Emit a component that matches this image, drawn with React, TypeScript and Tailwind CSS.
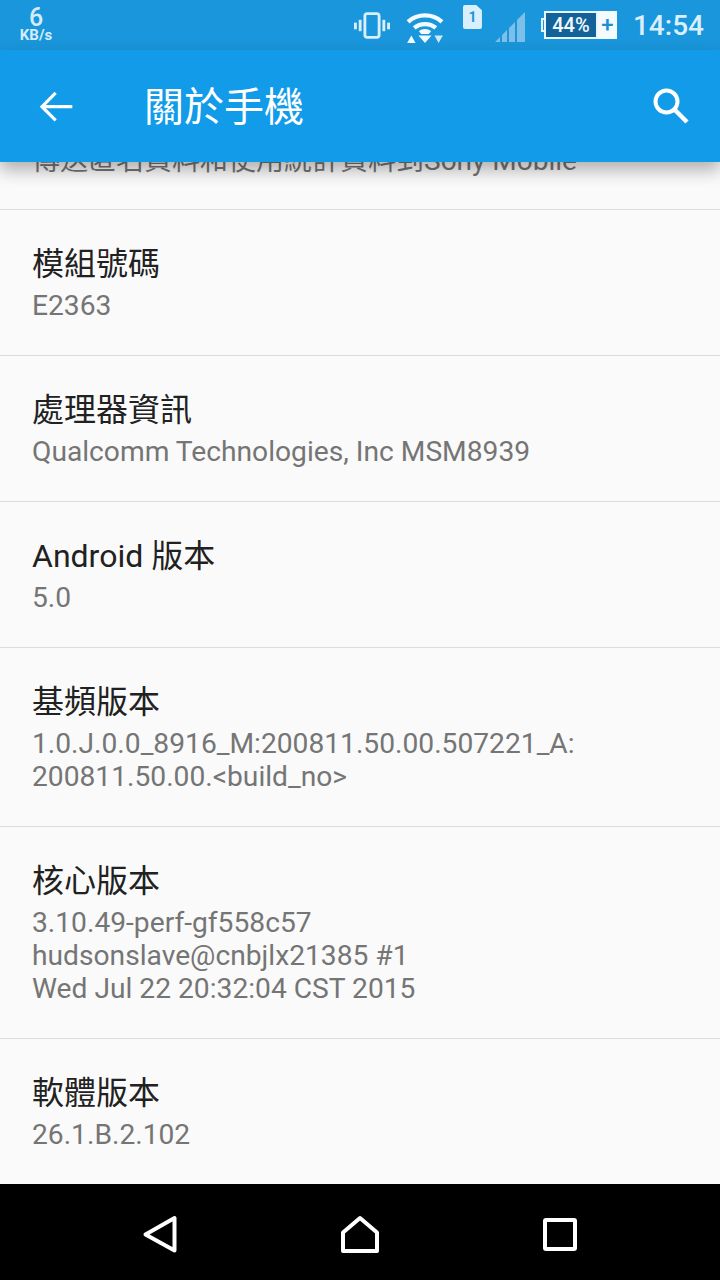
import React from 'react';

const rows = [
  { title: '模組號碼', lines: ['E2363'] },
  { title: '處理器資訊', lines: ['Qualcomm Technologies, Inc MSM8939'] },
  { title: 'Android 版本', lines: ['5.0'] },
  { title: '基頻版本', lines: ['1.0.J.0.0_8916_M:200811.50.00.507221_A:', '200811.50.00.<build_no>'] },
  { title: '核心版本', lines: ['3.10.49-perf-gf558c57', 'hudsonslave@cnbjlx21385 #1', 'Wed Jul 22 20:32:04 CST 2015'] },
  { title: '軟體版本', lines: ['26.1.B.2.102'] },
];

const StatusBar = () => (
  <div className="h-[50px] bg-[#1a96dc] flex items-center relative shrink-0">
    <div className="absolute left-[17px] top-[7px] w-[38px] flex flex-col items-center text-[#d3edfb] font-medium">
      <span className="text-[25px] leading-[22px]">6</span>
      <span className="text-[15px] leading-[13px] font-bold">KB/s</span>
    </div>
    <div className="ml-auto flex items-center h-full">
      {/* vibrate */}
      <svg width="36" height="29" viewBox="0 0 38 30" className="mr-[16px]" fill="none">
        <rect x="11.5" y="2.5" width="15" height="25" rx="2.5" stroke="#d9f0fc" strokeWidth="3" />
        <rect x="5" y="9" width="3" height="12" fill="#d9f0fc" />
        <rect x="0" y="12" width="3" height="7" fill="#d9f0fc" />
        <rect x="30" y="9" width="3" height="12" fill="#d9f0fc" />
        <rect x="35" y="12" width="3" height="7" fill="#d9f0fc" />
      </svg>
      {/* wifi */}
      <svg width="38" height="32" viewBox="0 0 40 34" className="mr-[19px] mt-[4px]" fill="none">
        <path d="M2 11.5C12 2.5 28 2.5 38 11.5" stroke="#f2fafe" strokeWidth="4.5" />
        <path d="M8.5 18C15 12.5 25 12.5 31.5 18" stroke="#f2fafe" strokeWidth="4.5" />
        <path d="M13.5 21.5C17 18.5 23 18.5 26.5 21.5L24 24.5H16Z" fill="#f2fafe" />
        <path d="M13 26H27L20 34Z" fill="#f2fafe" />
        <path d="M1 34L5.5 26L10 34Z" fill="#f2fafe" />
        <path d="M30 26H39L34.5 34Z" fill="#cfe9f8" />
      </svg>
      {/* sim */}
      <div className="relative w-[19px] h-[24px] bg-[#d9f0fc] rounded-[2px] mr-[13px] -mt-[16px] flex items-center justify-center [clip-path:polygon(0_0,70%_0,100%_22%,100%_100%,0_100%)]">
        <span className="text-[#1a96dc] text-[14px] leading-none font-bold">1</span>
      </div>
      {/* signal */}
      <svg width="31" height="31" viewBox="0 0 31 31" className="mr-[15px] mt-[2px]">
        <path d="M0 31L5 26V31Z M7 31V24L12 19V31Z M14 31V17L20 11V31Z M22 31V9L30 1V31Z" fill="#7cc0ea" />
      </svg>
      {/* battery */}
      <div className="flex items-center mr-[16px]">
        <div className="w-[3px] h-[14px] border-l-[2px] border-y-[2px] border-[#e8f6fd]" />
        <div className="w-[54px] h-[28px] border-2 border-[#e8f6fd] bg-[#12639a] flex items-center justify-center text-[#f0f9fe] text-[20px] leading-none font-medium">
          44%
        </div>
        <div className="w-[19px] h-[28px] bg-[#f4fbfe] flex items-center justify-center text-[#1a8fd6] text-[22px] leading-none font-medium">
          +
        </div>
      </div>
      <span className="text-[#d9f0fc] text-[28px] leading-none font-medium mr-[16px] mt-[2px]">14:54</span>
    </div>
  </div>
);

const Toolbar = () => (
  <div className="h-[112px] bg-[#129be8] flex items-center relative z-10 shadow-[0_8px_16px_rgba(0,0,0,0.3)] shrink-0">
    <svg width="36" height="32" viewBox="0 0 36 32" className="ml-[39px] mr-[69px] mt-[2px]" fill="none">
      <path d="M34 16H3M17 2L3 16L17 30" stroke="#fff" strokeWidth="3.2" transform="scale(0.98)" />
    </svg>
    <span className="text-white text-[40px] leading-none mt-[3px]">關於手機</span>
    <svg width="38" height="38" viewBox="0 0 38 38" className="ml-auto mr-[30px] -mt-[1px]" fill="none">
      <circle cx="14.5" cy="14.5" r="11" stroke="#fff" strokeWidth="4" />
      <path d="M22.5 22.5L35 35" stroke="#fff" strokeWidth="4.5" />
    </svg>
  </div>
);

const NavBar = () => (
  <div className="h-[96px] bg-black flex items-center shrink-0 pt-[5px]">
    <svg width="36" height="40" viewBox="0 0 36 40" className="ml-[142px]" fill="none">
      <path d="M32.5 3V35.5L3.5 19.5Z" stroke="#fff" strokeWidth="4" strokeLinejoin="round" />
    </svg>
    <svg width="40" height="40" viewBox="0 0 40 40" className="ml-[162px]" fill="none">
      <path d="M3 36V17.5L20 3L37 17.5V36Z" stroke="#fff" strokeWidth="4" strokeLinejoin="round" />
    </svg>
    <svg width="34" height="34" viewBox="0 0 34 34" className="ml-[163px]" fill="none">
      <rect x="2" y="2" width="30" height="29" rx="1" stroke="#fff" strokeWidth="4" />
    </svg>
  </div>
);

export default function App() {
  return (
    <div
      className="w-[720px] h-[1280px] flex flex-col overflow-hidden bg-[#fafafa]"
      style={{ fontFamily: 'Roboto, "Noto Sans CJK TC", sans-serif' }}
    >
      <StatusBar />
      <Toolbar />
      <div className="flex-1 min-h-0 overflow-hidden">
        <div className="h-[48px] border-b border-[#dcdcdc] overflow-hidden pl-8">
          <div className="-mt-[18px] text-[28px] leading-[33px] text-[#757575]">傳送匿名資料和使用統計資料到Sony Mobile</div>
        </div>
        {rows.map((r) => (
          <div key={r.title} className="pl-8 pt-[33px] pb-[33px] border-b border-[#dcdcdc] last:border-b-0">
            <div className="text-[32px] leading-[42px] text-[#212121]">{r.title}</div>
            <div className="mt-[4px] text-[28.2px] leading-[33px] text-[#757575]">
              {r.lines.map((l) => (
                <div key={l}>{l}</div>
              ))}
            </div>
          </div>
        ))}
      </div>
      <NavBar />
    </div>
  );
}
